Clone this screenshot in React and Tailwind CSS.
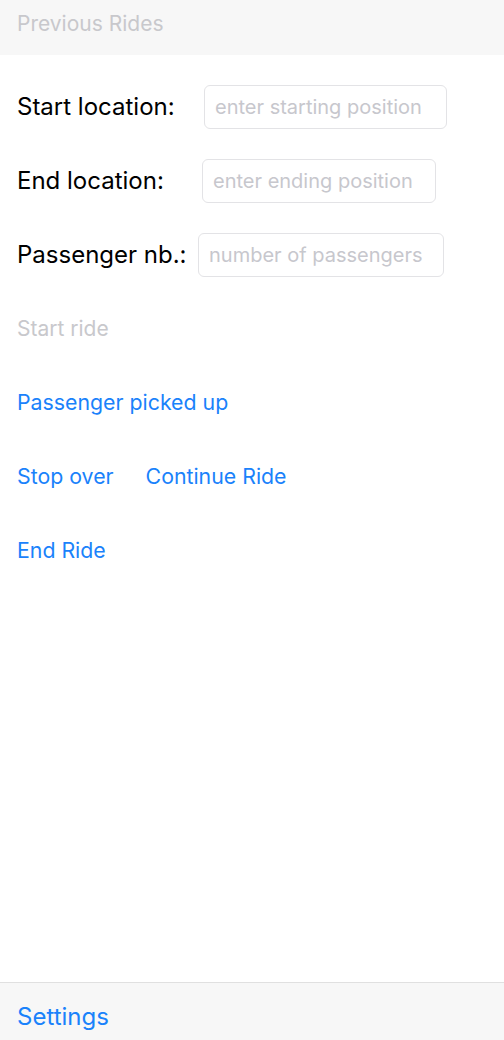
import React from 'react'

const font = { fontFamily: 'Inter, "Liberation Sans", Arial, sans-serif' }

const Field = ({ label, placeholder, labelWidth, width }) => (
  <div className="flex items-center h-[74px]">
    <span className={`${labelWidth} shrink-0 text-[24px] text-black whitespace-nowrap`}>{label}</span>
    <input
      placeholder={placeholder}
      className={`${width} h-[44px] rounded-[6px] border border-[#e3e3e6] px-[10px] text-[20px] placeholder:text-[#c7c7cd] outline-none`}
    />
  </div>
)

const App = () => {
  return (
    <div className="h-[1040px] flex flex-col bg-white" style={font}>
      {/* HEADER */}
      <div className="h-[55px] bg-[#f7f7f7] flex items-center px-[17px]">
        <span className="text-[21px] text-[#c8c8cc] -mt-[8px]">Previous Rides</span>
      </div>

      <div className="flex-1 px-[17px] pt-[15px]">
        <Field label="Start location:" placeholder="enter starting position" labelWidth="w-[187px]" width="w-[243px]" />
        <Field label="End location:" placeholder="enter ending position" labelWidth="w-[185px]" width="w-[234px]" />
        <Field label="Passenger nb.:" placeholder="number of passengers" labelWidth="w-[181px]" width="w-[246px]" />

        <div className="flex items-center h-[74px]">
          <button className="text-[21px] text-[#c8c8cc]">Start ride</button>
        </div>
        <div className="flex items-center h-[74px]">
          <button className="text-[21.3px] text-[#1a82fb]">Passenger picked up</button>
        </div>
        <div className="flex items-center h-[74px] gap-[32px]">
          <button className="text-[21.3px] text-[#1a82fb]">Stop over</button>
          <button className="text-[21.3px] text-[#1a82fb]">Continue Ride</button>
        </div>
        <div className="flex items-center h-[74px]">
          <button className="text-[21.3px] text-[#1a82fb]">End Ride</button>
        </div>
      </div>

      {/* FOOTER */}
      <div className="h-[58px] bg-[#f7f7f7] border-t border-[#e0e0e0] flex items-center px-[17px]">
        <button className="text-[24px] text-[#1a82fb] mt-[10px]">Settings</button>
      </div>
    </div>
  )
}

export default App
